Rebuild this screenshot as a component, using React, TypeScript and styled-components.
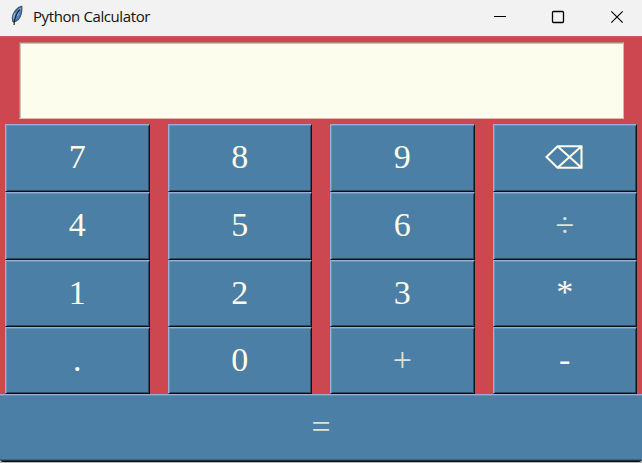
import React from 'react';
import styled, { createGlobalStyle } from 'styled-components';

const GlobalStyle = createGlobalStyle`
  * { box-sizing: border-box; }
  html, body { margin: 0; padding: 0; overflow: hidden; background: #b9b9b7; }
`;

const Window = styled.main`
  width: 642px;
  height: 463px;
  display: flex;
  flex-direction: column;
  background: #b9b9b7;
`;

const TitleBar = styled.header`
  height: 36px;
  flex: none;
  display: flex;
  align-items: center;
  padding: 0 0 2px 9px;
  background: #f2f2f2;
`;

const Feather = styled.svg`
  width: 16px;
  height: 22px;
  flex: none;
  margin-bottom: 2px;
`;

const Title = styled.h1`
  margin: 0 0 2px 8px;
  flex: 1;
  font: 400 15px/20px "Open Sans", "Noto Sans", sans-serif;
  letter-spacing: -0.4px;
  white-space: nowrap;
  color: #111;
`;

const Controls = styled.div`
  display: flex;
  margin-right: -4px;
`;

const WindowButton = styled.button`
  width: 58.5px;
  height: 34px;
  padding: 0;
  border: 0;
  background: transparent;
  display: grid;
  place-items: center;
  svg { width: 14px; height: 14px; display: block; }
`;

const Body = styled.section`
  height: 426px;
  flex: none;
  display: flex;
  flex-direction: column;
  background: #cc474f;
  border-top: 1px solid #d0595f;
  border-radius: 0 0 4px 4px;
  overflow: hidden;
`;

const Display = styled.output`
  display: block;
  height: 77px;
  margin: 5px 18px 5px 19px;
  background: #fcfdec;
  border: 1px solid;
  border-color: #a9857e #e2b3aa #e2b3aa #a9857e;
  box-shadow: inset 1px 1px 0 #c9c6b9;
`;

const Keypad = styled.div`
  display: grid;
  grid-template-columns: repeat(4, 144.5px);
  grid-template-rows: 68px 68px 67px 67px;
  column-gap: 18px;
  padding-left: 5px;
`;

const Key = styled.button<{ $wide?: boolean }>`
  height: ${p => (p.$wide ? '68px' : '100%')};
  width: ${p => (p.$wide ? '642px' : 'auto')};
  flex: none;
  padding: 0;
  display: grid;
  place-items: center;
  background: #4b7fa5;
  border-style: solid;
  border-width: ${p => (p.$wide ? '1px 0' : '1px')};
  border-color: #9fadd4 #0c151b #080d11 #9fadd4;
  box-shadow: ${p =>
    p.$wide
      ? 'inset 0 1px 0 #638fb8, inset 0 -1px 0 #20343f, inset 0 -2px 0 #3a6482'
      : 'inset 1px 1px 0 #6593bd, inset -1px -1px 0 #2c4c63'};
  color: #fcfbea;
  font: 400 34px/38px "Liberation Serif", serif;
`;

const KeyLabel = styled.span<{ $light?: boolean; $raised?: boolean }>`
  display: block;
  line-height: 38px;
  padding-bottom: ${p => (p.$raised ? 4 : 2)}px;
  color: ${p => (p.$light ? '#dbe2da' : '#fcfbea')};
`;

const EraseIcon = styled.svg`
  display: block;
  width: 38px;
  height: 24px;
  margin: 0 1px 3px 0;
`;

const keys = ['7', '8', '9', 'erase', '4', '5', '6', '÷', '1', '2', '3', '*', '.', '0', '+', '-'];

export default function App() {
  return (
    <>
      <GlobalStyle />
      <Window>
        <TitleBar>
          <Feather viewBox="0 0 16 22" aria-hidden="true">
            <path d="M12.7 1.2C8.3 1.7 3.6 7.8 3.3 13c-.1 1.8.2 3.3 1.2 4.2 4.1-1 6.8-4.4 7.8-8.5.5-2.8.9-5.6.4-7.5Z" fill="#4b82c4" stroke="#4a4f55" strokeWidth="1.1" />
            <path d="M11.3 3.2C9.2 6 8.6 8.2 8.2 11M6.1 8.2C4.8 10.5 4.6 12.3 5 14" fill="none" stroke="#82b2e4" strokeWidth="1.5" />
            <path d="M10.8 4.5C7.2 8.4 5.3 12.5 5.1 20" fill="none" stroke="#23272b" strokeWidth="1.2" />
          </Feather>
          <Title>Python Calculator</Title>
          <Controls>
            <WindowButton aria-label="Minimize">
              <svg viewBox="0 0 14 14"><path d="M1 6.5h12" stroke="#000" /></svg>
            </WindowButton>
            <WindowButton aria-label="Maximize">
              <svg viewBox="0 0 14 14"><rect x="1.5" y="1.5" width="11" height="11" rx="1" fill="none" stroke="#000" strokeWidth="1.3" /></svg>
            </WindowButton>
            <WindowButton aria-label="Close">
              <svg viewBox="0 0 14 14"><path d="m1.3 1.3 11.4 11.4m0-11.4L1.3 12.7" stroke="#000" strokeWidth="1.15" /></svg>
            </WindowButton>
          </Controls>
        </TitleBar>
        <Body>
          <Display />
          <Keypad>
            {keys.map(key => (
              <Key key={key} aria-label={key}>
                {key === 'erase' ? (
                  <EraseIcon viewBox="0 0 38 24">
                    <path d="M12.5 1.2h24v21.6h-24L1.5 12ZM12.5 1.2l24 21.6M36.5 1.2l-24 21.6" fill="none" stroke="#fcfbea" strokeWidth="2.1" />
                  </EraseIcon>
                ) : (
                  <KeyLabel $light={key === '+' || key === '÷'} $raised={key === '*'}>{key}</KeyLabel>
                )}
              </Key>
            ))}
          </Keypad>
          <Key $wide><KeyLabel $light>=</KeyLabel></Key>
        </Body>
      </Window>
    </>
  );
}
